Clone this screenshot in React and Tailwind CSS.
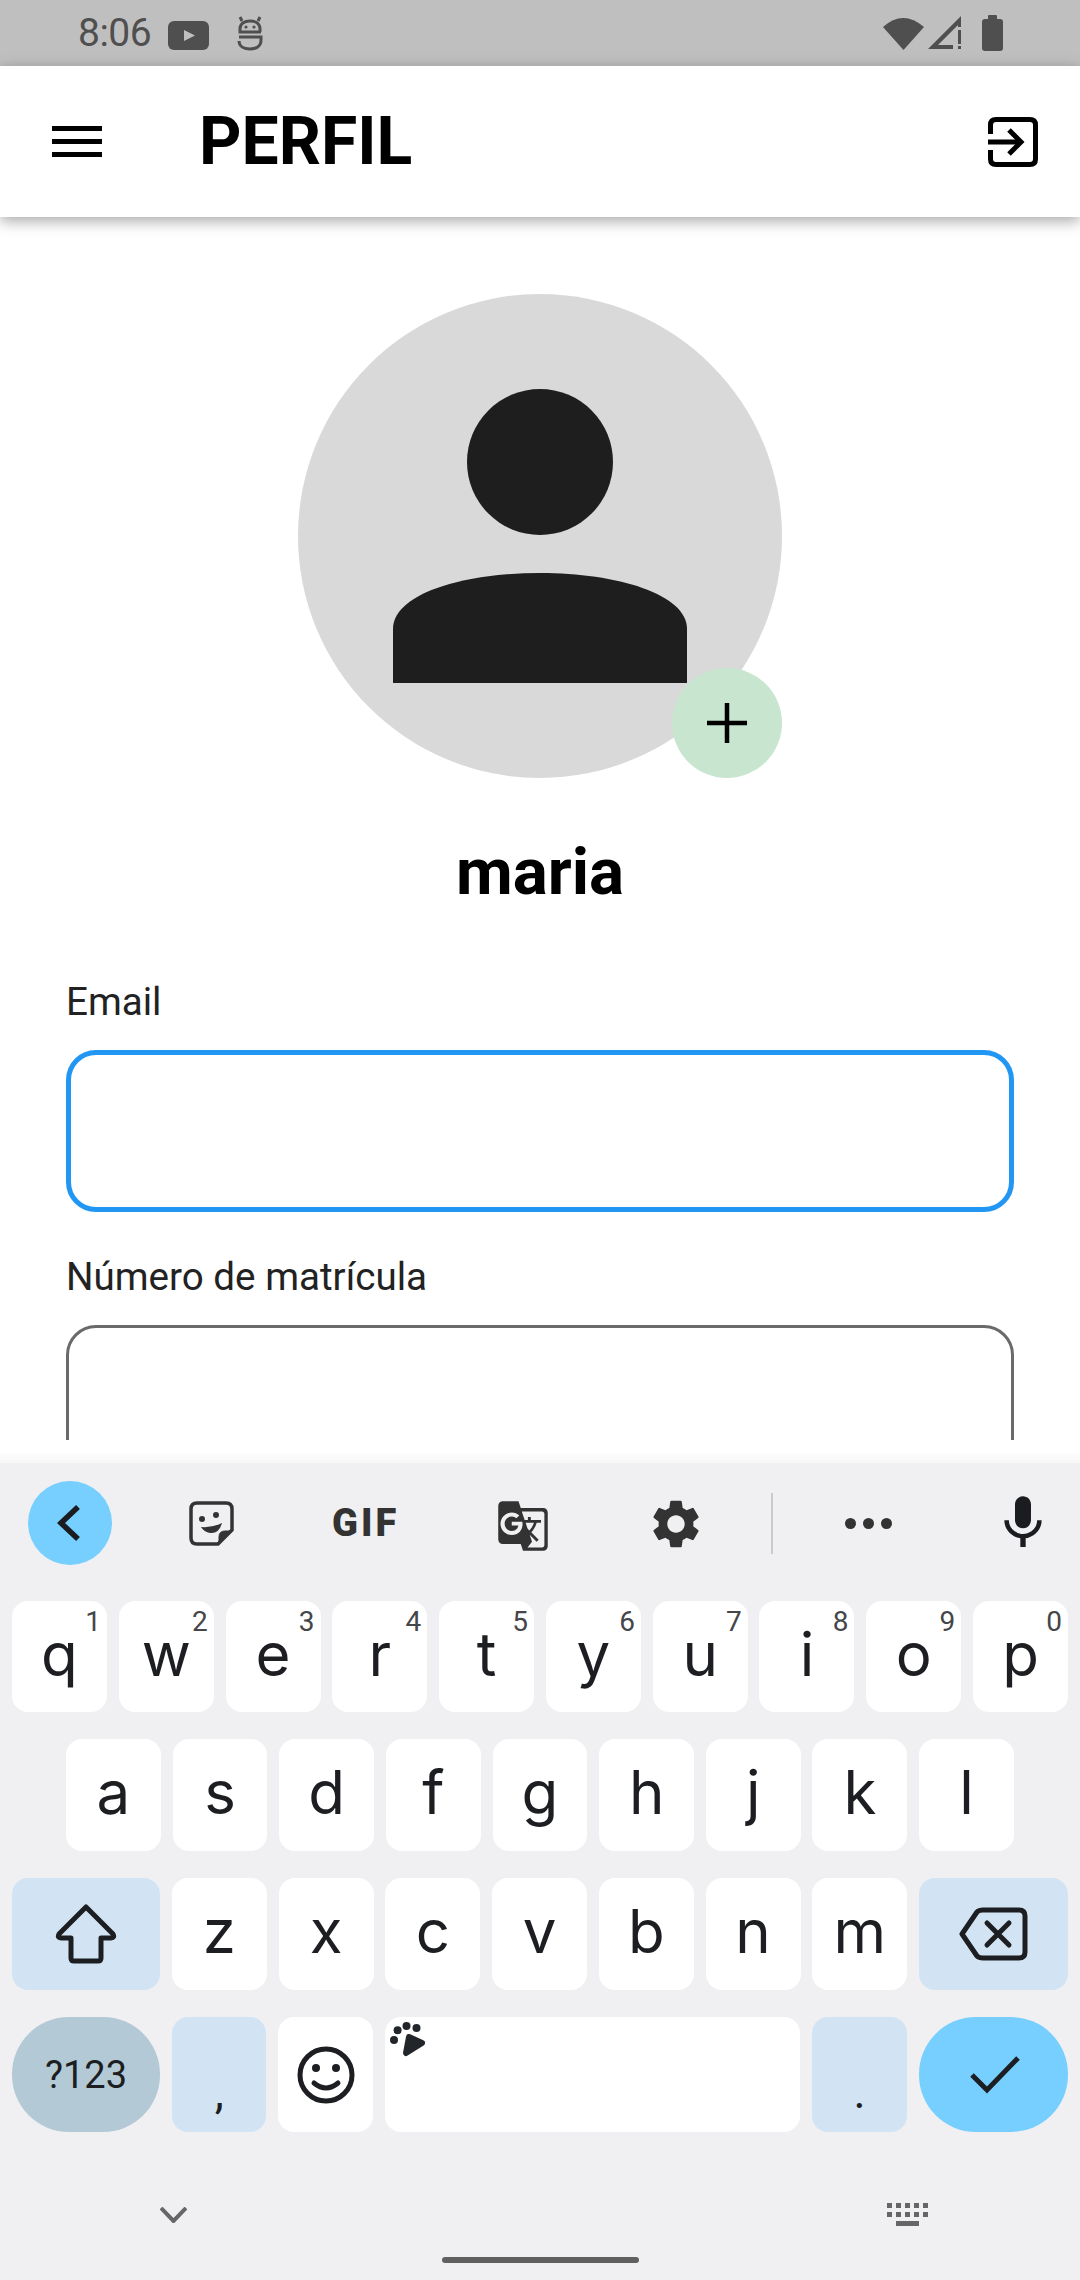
import { MdGTranslate, MdMic, MdSettings } from 'react-icons/md';

const fila1 = [['q', '1'], ['w', '2'], ['e', '3'], ['r', '4'], ['t', '5'], ['y', '6'], ['u', '7'], ['i', '8'], ['o', '9'], ['p', '0']];
const fila2 = ['a', 's', 'd', 'f', 'g', 'h', 'j', 'k', 'l'];
const fila3 = ['z', 'x', 'c', 'v', 'b', 'n', 'm'];

function Tecla({ letra, numero }) {
  return (
    <div className="relative flex-1 h-full bg-white rounded-[16px] flex justify-center pt-[23px] font-[Inter,sans-serif] text-[60px] leading-[60px] text-[#1c1e21]">
      {letra}
      {numero && (
        <span className="absolute top-[7px] right-[6px] font-[Roboto,sans-serif] text-[28px] leading-[28px] text-[#444649]">{numero}</span>
      )}
    </div>
  );
}

function BarraEstado() {
  return (
    <div className="h-[66px] shrink-0 bg-[#bfbfbf] flex items-center pl-[78px] text-[#4f4f4f]">
      <span className="text-[39px] leading-[39px] w-[90px] tracking-[-0.5px]">8:06</span>
      <svg width="41" height="29" viewBox="0 0 41 29" className="mt-[4px]">
        <rect width="41" height="29" rx="6" fill="#4f4f4f" />
        <path d="M16 9 L27 14.5 L16 20 Z" fill="#bfbfbf" />
      </svg>
      <svg width="26" height="35" viewBox="0 0 26 35" className="ml-[28px]" fill="none" stroke="#4f4f4f" strokeWidth="3">
        <path d="M24 16 H3 V13 C3 7 8 5 13 5 C18 5 23 7 23 13 V16" />
        <path d="M2 21 H24 V24 C24 31 18 33 13 33 C8 33 2 31 2 25" />
        <path d="M5 5 L3 1 M21 5 L23 1" />
        <circle cx="9" cy="11" r="1.6" fill="#4f4f4f" stroke="none" />
        <circle cx="17" cy="11" r="1.6" fill="#4f4f4f" stroke="none" />
      </svg>
      <svg width="41" height="34" viewBox="0 0 41 34" className="ml-auto" fill="#4f4f4f">
        <path d="M0 11 Q20 -7 41 11 L20.5 34 Z" />
      </svg>
      <svg width="34" height="34" viewBox="0 0 34 34" className="ml-[4px]" fill="#4f4f4f">
        <path d="M33 0 L0 33 H25 V29 H10 L30 9 V11 H33 Z" />
        <rect x="30" y="14" width="3" height="14" />
        <rect x="30" y="30" width="3" height="3" />
      </svg>
      <svg width="21" height="36" viewBox="0 0 21 36" className="ml-[20px] mr-[77px]" fill="#4f4f4f">
        <rect x="6" y="0" width="9" height="6" rx="1" />
        <rect x="0" y="4" width="21" height="32" rx="3" />
      </svg>
    </div>
  );
}

function Cabecera() {
  return (
    <div className="relative z-10 h-[151px] shrink-0 bg-white flex items-center pl-[52px] pr-[42px] shadow-[0_4px_14px_rgba(0,0,0,0.35)]">
      <div className="w-[50px] flex flex-col gap-[8px]">
        <div className="h-[5px] bg-black"></div>
        <div className="h-[5px] bg-black"></div>
        <div className="h-[5px] bg-black"></div>
      </div>
      <h1 className="ml-[97px] text-[66px] leading-[66px] font-bold text-black">PERFIL</h1>
      <svg width="50" height="50" viewBox="0 0 50 50" className="ml-auto" fill="none" stroke="#000" strokeWidth="5">
        <path d="M2.5 17 V8 Q2.5 2.5 8 2.5 H42 Q47.5 2.5 47.5 8 V42 Q47.5 47.5 42 47.5 H8 Q2.5 47.5 2.5 42 V33" />
        <path d="M0 25 H33" />
        <path d="M21 13 L33 25 L21 37" />
      </svg>
    </div>
  );
}

function Avatar() {
  return (
    <div className="relative w-[484px] h-[484px] mx-auto bg-[#d9d9d9] rounded-full flex items-center justify-center">
      <svg width="294" height="294" viewBox="0 0 294 294" fill="#1e1e1e">
        <circle cx="147" cy="73" r="73" />
        <path d="M0 294 V240 C0 205 70 184 147 184 S294 205 294 240 V294 Z" />
      </svg>
      <div className="absolute right-0 bottom-0 w-[110px] h-[110px] rounded-full bg-[#c8e6cf] flex items-center justify-center">
        <svg width="40" height="40" viewBox="0 0 40 40" stroke="#000" strokeWidth="4.5">
          <path d="M0 20 H40 M20 0 V40" />
        </svg>
      </div>
    </div>
  );
}

function Campo({ label, activo }) {
  return (
    <div>
      <p className="text-[38.6px] leading-[36px] text-[#222]">{label}</p>
      <div className={activo
        ? 'mt-[30px] h-[162px] rounded-[30px] border-[5px] border-[#2196f3] bg-white'
        : 'mt-[30px] h-[162px] rounded-[30px] border-[3px] border-[#6a6a6a] bg-white'}
      ></div>
    </div>
  );
}

function Teclado() {
  return (
    <div className="h-[817px] shrink-0 bg-[#f0f0f2]">
      {/* barra de sugerencias */}
      <div className="h-[138px] pb-[18px] pl-[28px] flex items-center text-[#333]">
        <div className="w-[84px] h-[84px] rounded-full bg-[#76cfff] flex items-center justify-center">
          <svg width="24" height="36" viewBox="0 0 24 36" fill="none" stroke="#1a1c1f" strokeWidth="5.5" className="-ml-[3px]">
            <path d="M21 2 L4 18 L21 34" />
          </svg>
        </div>
        <svg width="45" height="45" viewBox="0 0 45 45" className="ml-[77px]" fill="none" stroke="#333" strokeWidth="3.5">
          <path d="M8 2 H37 Q43 2 43 8 V29 L29 43 H8 Q2 43 2 37 V8 Q2 2 8 2 Z" />
          <path d="M43 30 L30 43 V36 Q30 30 36 30 Z" fill="#333" strokeWidth="1" />
          <circle cx="13" cy="18" r="3" fill="#333" stroke="none" />
          <circle cx="27" cy="14" r="3" fill="#333" stroke="none" />
          <path d="M12 26 Q23 27 33 22 Q30 33 21 32 Q15 31 12 26 Z" fill="#333" stroke="none" />
        </svg>
        <span className="ml-[98px] w-[66px] text-[38px] leading-[38px] font-black tracking-[3px]">GIF</span>
        <MdGTranslate size={54} className="ml-[98px] mt-[6px]" />
        <MdSettings size={58} className="ml-[97px] mt-[2px]" />
        <div className="ml-[66px] w-[2px] h-[61px] bg-[#c9cacc]"></div>
        <div className="ml-[72px] flex gap-[7px]">
          <div className="w-[11px] h-[11px] rounded-full bg-[#333]"></div>
          <div className="w-[11px] h-[11px] rounded-full bg-[#333]"></div>
          <div className="w-[11px] h-[11px] rounded-full bg-[#333]"></div>
        </div>
        <MdMic size={64} className="ml-[99px] text-[#1a1c1f]" />
      </div>

      {/* filas de teclas */}
      <div className="h-[111px] px-[12px] flex gap-[11.8px]">
        {fila1.map(([l, n]) => <Tecla key={l} letra={l} numero={n} />)}
      </div>
      <div className="mt-[27px] h-[112px] px-[66px] flex gap-[11.8px]">
        {fila2.map((l) => <Tecla key={l} letra={l} />)}
      </div>
      <div className="mt-[27px] h-[112px] px-[12px] flex gap-[11.8px]">
        <div className="w-[148px] shrink-0 bg-[#d2e4f3] rounded-[16px] flex items-center justify-center">
          <svg width="62" height="60" viewBox="0 0 62 60" fill="none" stroke="#1c1e21" strokeWidth="5" strokeLinejoin="round">
            <path d="M31 3 L58 30 Q60 34 56 34 L46 34 L46 54 Q46 57 43 57 L19 57 Q16 57 16 54 L16 34 L6 34 Q2 34 4 30 Z" />
          </svg>
        </div>
        {fila3.map((l) => <Tecla key={l} letra={l} />)}
        <div className="w-[149px] shrink-0 bg-[#d2e4f3] rounded-[16px] flex items-center justify-center">
          <svg width="69" height="54" viewBox="0 0 69 54" fill="none" stroke="#1c1e21" strokeWidth="5" strokeLinecap="round" strokeLinejoin="round">
            <path d="M3 27 L18 5 Q20 3 24 3 L60 3 Q66 3 66 9 L66 45 Q66 51 60 51 L24 51 Q20 51 18 49 Z" />
            <path d="M28 16 L50 38 M50 16 L28 38" />
          </svg>
        </div>
      </div>
      <div className="mt-[27px] h-[115px] px-[12px] flex gap-[12px] text-[#1c1e21]">
        <div className="w-[148px] shrink-0 bg-[#b3c9d6] rounded-[57px] flex items-center justify-center text-[38px] leading-[38px]">?123</div>
        <div className="w-[94.4px] shrink-0 bg-[#d2e4f3] rounded-[16px] flex justify-center pt-[52px] text-[46px] leading-[46px]">,</div>
        <div className="w-[94.4px] shrink-0 bg-white rounded-[16px] flex items-center justify-center">
          <svg width="58" height="58" viewBox="0 0 58 58" fill="none" stroke="#1c1e21" strokeWidth="5">
            <circle cx="29" cy="29" r="26" />
            <circle cx="19" cy="22" r="4" fill="#1c1e21" stroke="none" />
            <circle cx="39" cy="22" r="4" fill="#1c1e21" stroke="none" />
            <path d="M17 37 Q29 47 41 37" strokeLinecap="round" />
          </svg>
        </div>
        <div className="relative flex-1 bg-white rounded-[16px]">
          <svg width="36" height="36" viewBox="0 0 36 36" className="absolute left-[5px] top-[5px]" fill="#22262a">
            <circle cx="7.6" cy="8.3" r="4" />
            <circle cx="16.5" cy="4" r="4" />
            <circle cx="26.5" cy="6" r="4" />
            <circle cx="4" cy="18" r="4" />
            <path d="M19 15 L32 21 L16 31 Z" stroke="#22262a" strokeWidth="6" strokeLinejoin="round" />
          </svg>
        </div>
        <div className="w-[94.8px] shrink-0 bg-[#d2e4f3] rounded-[16px] flex justify-center pt-[52px] text-[46px] leading-[46px]">.</div>
        <div className="w-[149px] shrink-0 bg-[#76cfff] rounded-[57px] flex items-center justify-center">
          <svg width="56" height="44" viewBox="0 0 56 44" fill="none" stroke="#1c1e21" strokeWidth="5">
            <path d="M6 22 L21 37 L52 5" />
          </svg>
        </div>
      </div>

      {/* barra inferior */}
      <div className="mt-[71px] h-[24px] pl-[160px] pr-[151px] flex items-center justify-between">
        <svg width="27" height="16" viewBox="0 0 27 16" fill="none" stroke="#666" strokeWidth="4">
          <path d="M1 1 L13.5 14 L26 1" />
        </svg>
        <svg width="42" height="24" viewBox="0 0 42 24" fill="#666">
          {[0, 9, 18, 27, 36].map((x) => <rect key={x} x={x} y="0" width="5" height="5" />)}
          {[0, 9, 18, 27, 36].map((x) => <rect key={x} x={x} y="9" width="5" height="5" />)}
          <rect x="9" y="18" width="23" height="5" />
        </svg>
      </div>
      <div className="mt-[30px] mx-auto w-[197px] h-[6px] rounded-full bg-[#606060]"></div>
    </div>
  );
}

export default function App() {
  return (
    <div className="w-[1080px] h-[2280px] flex flex-col bg-white overflow-hidden font-[Roboto,sans-serif]">
      <BarraEstado />
      <Cabecera />
      <div className="flex-1 min-h-0 overflow-hidden px-[66px] pt-[77px]">
        <Avatar />
        <h2 className="mt-[61px] text-center text-[65.5px] leading-[65px] font-bold text-black">maria</h2>
        <div className="mt-[80px] flex flex-col gap-[47px]">
          <Campo label="Email" activo />
          <Campo label="Número de matrícula" />
        </div>
      </div>
      <div className="h-[23px] shrink-0 bg-gradient-to-b from-white via-white to-[#f6f6f7]"></div>
      <Teclado />
    </div>
  );
}
